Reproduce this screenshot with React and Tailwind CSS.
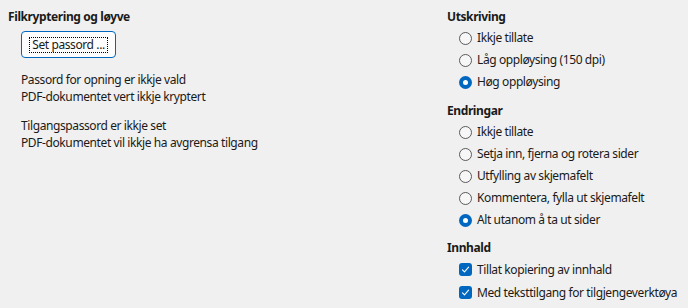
import React from "react";

function Radio({ label, checked }) {
  return (
    <div className="flex h-[22px] items-center pl-[12px]">
      {checked ? (
        <span className="flex h-[13px] w-[13px] shrink-0 items-center justify-center rounded-full bg-[#0067c0]">
          <span className="h-[5px] w-[5px] rounded-full bg-white" />
        </span>
      ) : (
        <span className="h-[13px] w-[13px] shrink-0 rounded-full border border-[#5a5a5a] bg-[#f7f7f7]" />
      )}
      <span className="ml-[5px]">{label}</span>
    </div>
  );
}

function Check({ label }) {
  return (
    <div className="flex h-[23px] items-center pl-[12px]">
      <span className="flex h-[13px] w-[13px] shrink-0 items-center justify-center rounded-[3px] bg-[#0067c0]">
        <svg width="9" height="9" viewBox="0 0 9 9" fill="none">
          <path d="M1.5 4.8 L3.5 6.8 L7.6 2.2" stroke="white" strokeWidth="1.1" strokeLinecap="round" strokeLinejoin="round" />
        </svg>
      </span>
      <span className="ml-[5px]">{label}</span>
    </div>
  );
}

function Heading({ children, className = "" }) {
  return <div className={"h-[20px] leading-[20px] font-bold " + className}>{children}</div>;
}

export default function App() {
  return (
    <div
      className="flex h-[308px] w-[688px] whitespace-nowrap bg-[#f0f0f0] text-[12px] tracking-[-0.4px] text-[#1a1a1a]"
      style={{ fontFamily: '"Noto Sans", "Open Sans", sans-serif' }}
    >
      {/* left column */}
      <div className="w-[447px] pl-[8px] pt-[7px]">
        <Heading>Filkryptering og løyve</Heading>
        <div className="mt-[4px] ml-[13px] flex h-[27px] w-[95px] items-center justify-center rounded-[4px] border border-[#0067c0] bg-[#fdfdfd]">
          <span className="border border-dotted border-black px-[2px] leading-[14px]">Set passord ...</span>
        </div>
        <div className="mt-[13px] pl-[13px] leading-[17px]">
          <div>Passord for opning er ikkje vald</div>
          <div>PDF-dokumentet vert ikkje kryptert</div>
        </div>
        <div className="mt-[12px] pl-[13px] leading-[17px]">
          <div>Tilgangspassord er ikkje set</div>
          <div>PDF-dokumentet vil ikkje ha avgrensa tilgang</div>
        </div>
      </div>

      {/* right column */}
      <div className="flex-1 pt-[7px]">
        <Heading>Utskriving</Heading>
        <Radio label="Ikkje tillate" />
        <Radio label="Låg oppløysing (150 dpi)" />
        <Radio label="Høg oppløysing" checked />

        <Heading className="mt-[8px]">Endringar</Heading>
        <Radio label="Ikkje tillate" />
        <Radio label="Setja inn, fjerna og rotera sider" />
        <Radio label="Utfylling av skjemafelt" />
        <Radio label="Kommentera, fylla ut skjemafelt" />
        <Radio label="Alt utanom å ta ut sider" checked />

        <Heading className="mt-[7px]">Innhald</Heading>
        <Check label="Tillat kopiering av innhald" />
        <Check label="Med teksttilgang for tilgjengeverktøya" />
      </div>
    </div>
  );
}
